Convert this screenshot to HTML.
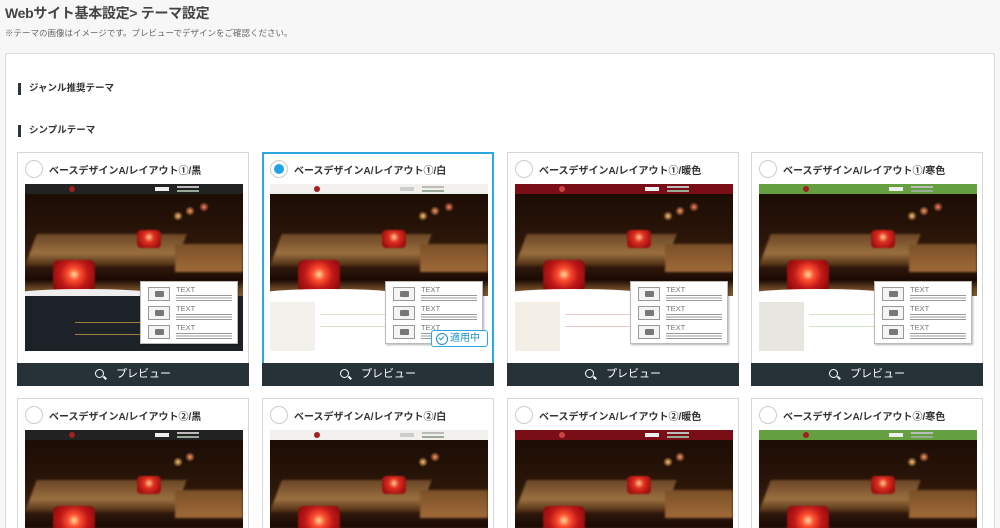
<!DOCTYPE html>
<html><head><meta charset="utf-8"><style>
*{box-sizing:border-box;margin:0;padding:0}
html,body{width:1000px;height:528px;overflow:hidden}
body{background:#f7f7f7;font-family:"Liberation Sans","Noto Sans CJK JP",sans-serif;color:#333;position:relative}
h1{position:absolute;left:5px;top:3px;font-size:14px;font-weight:bold;color:#444;letter-spacing:-0.3px}
.note{position:absolute;left:5px;top:27px;font-size:8.5px;color:#666}
.panel{position:absolute;left:5px;top:53px;width:990px;height:475px;background:#fff;border:1px solid #ddd;border-bottom:none}
.sec{position:absolute;left:12px;font-size:9.5px;font-weight:bold;color:#333;border-left:3px solid #2c353b;padding-left:8px;line-height:12px}
.card{position:absolute;width:232px;height:234px;border:1px solid #d6d6d6;background:#fff}
.card.sel{border:2px solid #29a9e0}
.radio{position:absolute;left:7px;top:7px;width:18px;height:18px;border:1px solid #ccc;border-radius:50%;background:#fff}
.sel .radio{left:6px;top:6px}
.sel .radio::after{content:"";position:absolute;left:3px;top:3px;width:10px;height:10px;border-radius:50%;background:#1fa5e5}
.ttl{position:absolute;left:31px;top:9px;font-size:10px;font-weight:bold;color:#333;white-space:nowrap}
.sel .ttl{left:30px;top:8px}
.img{position:absolute;left:7px;top:31px;width:218px;height:167px;overflow:hidden;background:#1e0e06}
.sel .img{left:6px;top:30px}
.img div{position:absolute}
.p1{left:0;top:10px;width:218px;height:110px;background:linear-gradient(180deg,#1c0d05 0,#2a1508 40%,#3b2010 60%,#1a0a04 78%,#6a4624 86%,#9a7040 100%)}
.tb{left:0;top:50px;width:150px;height:32px;background:linear-gradient(180deg,#6a4626,#9a7040 60%,#4a2a12);transform:skewX(-20deg);transform-origin:left bottom;filter:blur(1px)}
.tb2{left:150px;top:60px;width:68px;height:28px;background:linear-gradient(180deg,#7a5028,#a06a38);filter:blur(1px)}
.gl{left:28px;top:76px;width:42px;height:36px;border-radius:6px 6px 10px 10px;background:radial-gradient(circle at 50% 40%,#ffe0a0 0,#ff5030 6px,#c01818 14px,#8a0a0a 24px);filter:blur(.8px)}
.gl2{left:112px;top:46px;width:24px;height:18px;border-radius:4px;background:radial-gradient(circle at 50% 40%,#ffd090 0,#e03020 5px,#a01010 12px);filter:blur(.8px)}
.bk{border-radius:50%;width:10px;height:10px}
.hd{left:0;top:0;width:218px;height:10px}
.hd i{position:absolute;left:44px;top:2px;width:6px;height:6px;border-radius:50%;background:#a02020}
.hd b{position:absolute;left:130px;top:3px;width:14px;height:4px;background:#eee}
.hd u{position:absolute;left:152px;top:2px;width:22px;height:6px;border-top:2px solid #bbb;border-bottom:2px solid #9a9}
.low{left:0;top:112px;width:218px;height:55px}
.cv{left:-20px;top:105px;width:160px;height:14px;border-radius:50%}
.sb{left:0;top:118px;width:45px;height:49px}
.ln{height:1px}
.ov{left:115px;top:97px;width:98px;height:63px;background:#fff;border:1px solid #bbb;box-shadow:1px 1px 2px rgba(0,0,0,.3)}
.row{left:7px;height:17px;width:86px}
.cam{left:0;top:0;width:22px;height:14px;border:1px solid #999;background:#f4f4f4}
.cam::after{content:"";position:absolute;left:6px;top:3px;width:9px;height:6px;background:#777;border-radius:1px}
.tx{left:28px;top:-2px;font-size:7.5px;color:#777}
.bars{left:28px;top:8px;width:56px;height:7px;background:repeating-linear-gradient(180deg,#999 0 1px,transparent 1px 2.5px)}
.badge{left:161px;top:146px;width:57px;height:17px;background:#fff;border:1px solid #29a9e0;border-radius:3px;font-size:10px;color:#1a8fd0;padding-left:18px;line-height:15px}
.badge::before{content:"";position:absolute;left:4px;top:2px;width:10px;height:10px;border:1px solid #1a8fd0;border-radius:50%}
.badge::after{content:"";position:absolute;left:7px;top:5px;width:4px;height:2px;border-left:1px solid #1a8fd0;border-bottom:1px solid #1a8fd0;transform:rotate(-45deg)}
.pv{position:absolute;left:-1px;top:210px;width:232px;height:23px;background:#263238;color:#fff;font-size:11px;text-align:center;line-height:23px}
.sel .pv{left:-2px;top:209px}
.pv span{display:inline-block;width:9px;height:9px;border:1.5px solid #fff;border-radius:50%;position:relative;margin-right:12px;vertical-align:-1px}
.pv span::after{content:"";position:absolute;left:7px;top:7px;width:4px;height:1.5px;background:#fff;transform:rotate(45deg)}
</style></head><body>
<h1>Webサイト基本設定&gt; テーマ設定</h1>
<div class="note">※テーマの画像はイメージです。プレビューでデザインをご確認ください。</div>
<div class="panel">
<div class="sec" style="top:29px">ジャンル推奨テーマ</div>
<div class="sec" style="top:71px">シンプルテーマ</div>
</div>

<div class="card" style="left:17px;top:152px"><div class="radio"></div><div class="ttl">ベースデザインA/レイアウト①/黒</div>
<div class="img"><div class="p1"></div><div class="tb"></div><div class="tb2"></div><div class="gl2"></div><div class="bk" style="left:148px;top:27px;background:radial-gradient(#ffc070,rgba(200,80,20,0) 70%)"></div><div class="bk" style="left:160px;top:22px;background:radial-gradient(#ff9a60,rgba(200,80,20,0) 70%)"></div><div class="bk" style="left:174px;top:18px;background:radial-gradient(#ff8060,rgba(200,80,20,0) 70%)"></div><div class="gl"></div>
<div class="hd" style="background:#222"><i></i><b></b><u></u></div><div class="cv" style="background:#eee"></div><div class="low" style="background:#1c2228"></div><div class="sb" style="background:#1c2228"></div>
<div class="ln" style="left:50px;top:138px;width:80px;background:#a08040"></div><div class="ln" style="left:50px;top:150px;width:80px;background:#a08040"></div>
<div class="ov"><div class="row" style="top:5px"><div class="cam"></div><div class="tx">TEXT</div><div class="bars"></div></div><div class="row" style="top:24px"><div class="cam"></div><div class="tx">TEXT</div><div class="bars"></div></div><div class="row" style="top:43px"><div class="cam"></div><div class="tx">TEXT</div><div class="bars"></div></div></div></div>
<div class="pv"><span></span>プレビュー</div></div>

<div class="card sel" style="left:262px;top:152px"><div class="radio"></div><div class="ttl">ベースデザインA/レイアウト①/白</div>
<div class="img"><div class="p1"></div><div class="tb"></div><div class="tb2"></div><div class="gl2"></div><div class="bk" style="left:148px;top:27px;background:radial-gradient(#ffc070,rgba(200,80,20,0) 70%)"></div><div class="bk" style="left:160px;top:22px;background:radial-gradient(#ff9a60,rgba(200,80,20,0) 70%)"></div><div class="bk" style="left:174px;top:18px;background:radial-gradient(#ff8060,rgba(200,80,20,0) 70%)"></div><div class="gl"></div>
<div class="hd" style="background:#f2f0ec"><i></i><b style="background:#ccc"></b><u></u></div><div class="cv" style="background:#fff"></div><div class="low" style="background:#fff"></div><div class="sb" style="background:#f3f1ec"></div>
<div class="ln" style="left:50px;top:130px;width:80px;background:#d8e4c8"></div><div class="ln" style="left:50px;top:142px;width:80px;background:#d8e4c8"></div>
<div class="ov"><div class="row" style="top:5px"><div class="cam"></div><div class="tx">TEXT</div><div class="bars"></div></div><div class="row" style="top:24px"><div class="cam"></div><div class="tx">TEXT</div><div class="bars"></div></div><div class="row" style="top:43px"><div class="cam"></div><div class="tx">TEXT</div><div class="bars"></div></div></div>
<div class="badge">適用中</div></div>
<div class="pv"><span></span>プレビュー</div></div>

<div class="card" style="left:507px;top:152px"><div class="radio"></div><div class="ttl">ベースデザインA/レイアウト①/暖色</div>
<div class="img"><div class="p1"></div><div class="tb"></div><div class="tb2"></div><div class="gl2"></div><div class="bk" style="left:148px;top:27px;background:radial-gradient(#ffc070,rgba(200,80,20,0) 70%)"></div><div class="bk" style="left:160px;top:22px;background:radial-gradient(#ff9a60,rgba(200,80,20,0) 70%)"></div><div class="bk" style="left:174px;top:18px;background:radial-gradient(#ff8060,rgba(200,80,20,0) 70%)"></div><div class="gl"></div>
<div class="hd" style="background:#7a0e16"><i style="background:#c44"></i><b></b><u></u></div><div class="cv" style="background:#fff"></div><div class="low" style="background:#fff"></div><div class="sb" style="background:#f4efe6"></div>
<div class="ln" style="left:50px;top:130px;width:80px;background:#ecc8c8"></div><div class="ln" style="left:50px;top:142px;width:80px;background:#ecc8c8"></div>
<div class="ov"><div class="row" style="top:5px"><div class="cam"></div><div class="tx">TEXT</div><div class="bars"></div></div><div class="row" style="top:24px"><div class="cam"></div><div class="tx">TEXT</div><div class="bars"></div></div><div class="row" style="top:43px"><div class="cam"></div><div class="tx">TEXT</div><div class="bars"></div></div></div></div>
<div class="pv"><span></span>プレビュー</div></div>

<div class="card" style="left:751px;top:152px"><div class="radio"></div><div class="ttl">ベースデザインA/レイアウト①/寒色</div>
<div class="img"><div class="p1"></div><div class="tb"></div><div class="tb2"></div><div class="gl2"></div><div class="bk" style="left:148px;top:27px;background:radial-gradient(#ffc070,rgba(200,80,20,0) 70%)"></div><div class="bk" style="left:160px;top:22px;background:radial-gradient(#ff9a60,rgba(200,80,20,0) 70%)"></div><div class="bk" style="left:174px;top:18px;background:radial-gradient(#ff8060,rgba(200,80,20,0) 70%)"></div><div class="gl"></div>
<div class="hd" style="background:#64a040"><i></i><b></b><u></u></div><div class="cv" style="background:#fff"></div><div class="low" style="background:#fff"></div><div class="sb" style="background:#e8e6e0"></div>
<div class="ln" style="left:50px;top:130px;width:80px;background:#d0e4c0"></div><div class="ln" style="left:50px;top:142px;width:80px;background:#d0e4c0"></div>
<div class="ov"><div class="row" style="top:5px"><div class="cam"></div><div class="tx">TEXT</div><div class="bars"></div></div><div class="row" style="top:24px"><div class="cam"></div><div class="tx">TEXT</div><div class="bars"></div></div><div class="row" style="top:43px"><div class="cam"></div><div class="tx">TEXT</div><div class="bars"></div></div></div></div>
<div class="pv"><span></span>プレビュー</div></div>

<div class="card" style="left:17px;top:398px"><div class="radio"></div><div class="ttl">ベースデザインA/レイアウト②/黒</div>
<div class="img"><div class="p1"></div><div class="tb"></div><div class="tb2"></div><div class="gl2"></div><div class="bk" style="left:148px;top:27px;background:radial-gradient(#ffc070,rgba(200,80,20,0) 70%)"></div><div class="bk" style="left:160px;top:22px;background:radial-gradient(#ff9a60,rgba(200,80,20,0) 70%)"></div><div class="gl"></div><div class="hd" style="background:#222"><i></i><b></b><u></u></div></div></div>
<div class="card" style="left:262px;top:398px"><div class="radio"></div><div class="ttl">ベースデザインA/レイアウト②/白</div>
<div class="img"><div class="p1"></div><div class="tb"></div><div class="tb2"></div><div class="gl2"></div><div class="bk" style="left:148px;top:27px;background:radial-gradient(#ffc070,rgba(200,80,20,0) 70%)"></div><div class="bk" style="left:160px;top:22px;background:radial-gradient(#ff9a60,rgba(200,80,20,0) 70%)"></div><div class="gl"></div><div class="hd" style="background:#f2f0ec"><i></i><b style="background:#ccc"></b><u></u></div></div></div>
<div class="card" style="left:507px;top:398px"><div class="radio"></div><div class="ttl">ベースデザインA/レイアウト②/暖色</div>
<div class="img"><div class="p1"></div><div class="tb"></div><div class="tb2"></div><div class="gl2"></div><div class="bk" style="left:148px;top:27px;background:radial-gradient(#ffc070,rgba(200,80,20,0) 70%)"></div><div class="bk" style="left:160px;top:22px;background:radial-gradient(#ff9a60,rgba(200,80,20,0) 70%)"></div><div class="gl"></div><div class="hd" style="background:#7a0e16"><i style="background:#c44"></i><b></b><u></u></div></div></div>
<div class="card" style="left:751px;top:398px"><div class="radio"></div><div class="ttl">ベースデザインA/レイアウト②/寒色</div>
<div class="img"><div class="p1"></div><div class="tb"></div><div class="tb2"></div><div class="gl2"></div><div class="bk" style="left:148px;top:27px;background:radial-gradient(#ffc070,rgba(200,80,20,0) 70%)"></div><div class="bk" style="left:160px;top:22px;background:radial-gradient(#ff9a60,rgba(200,80,20,0) 70%)"></div><div class="gl"></div><div class="hd" style="background:#64a040"><i></i><b></b><u></u></div></div></div>
</body></html>
